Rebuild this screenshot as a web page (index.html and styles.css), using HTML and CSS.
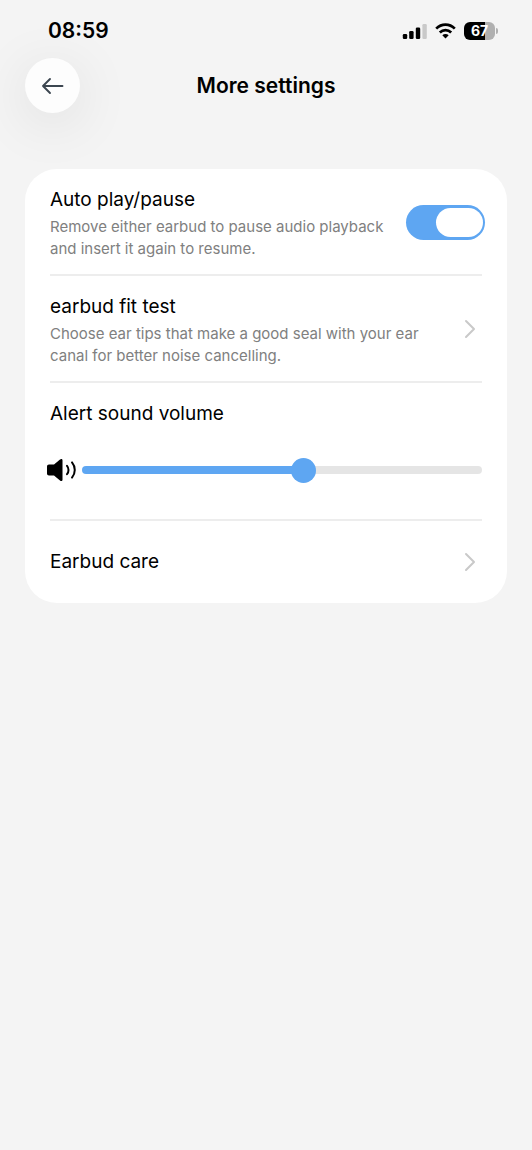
FILE: index.html
```html
<!DOCTYPE html>
<html lang="en">
<head>
<meta charset="utf-8">
<meta name="viewport" content="width=device-width, initial-scale=1">
<title>More settings</title>
<link rel="stylesheet" href="styles.css">
</head>
<body>
<div class="status-bar">
  <time class="clock">08:59</time>
  <div class="status-icons">
    <svg class="signal" width="25" height="16" viewBox="0 0 25 16" aria-hidden="true">
      <rect x="0.800" y="11" width="4.400" height="5" rx="1.300"/>
      <rect x="7.200" y="8" width="4.400" height="8" rx="1.300"/>
      <rect x="13.800" y="4.500" width="4.400" height="11.500" rx="1.300"/>
      <rect x="20.400" y="1" width="4.400" height="15" rx="1.300" fill="#c9c9c9"/>
    </svg>
    <svg class="wifi" width="21" height="16" viewBox="0 0 21 16" fill="none" stroke="#000" stroke-width="2.700" aria-hidden="true">
      <path d="M1.200 5.600C6.500.2 14.500.2 19.800 5.600"/>
      <path d="M4.800 9.500c3.300-3.300 8.100-3.300 11.400 0"/>
      <path d="M10.500 15.600 7.300 12.200c1.900-1.700 4.500-1.700 6.400 0z" fill="#000" stroke="none"/>
    </svg>
    <div class="battery"><span class="battery-body">67</span><span class="battery-tip"></span></div>
  </div>
</div>

<header class="header">
  <button class="back" type="button" aria-label="Back">
    <svg width="24" height="18" viewBox="0 0 24 18" fill="none" stroke="#3c4650" stroke-width="1.900" stroke-linecap="round" stroke-linejoin="round" aria-hidden="true">
      <path d="M21.500 9H2M9 2 2 9l7 7"/>
    </svg>
  </button>
  <h1 class="title">More settings</h1>
</header>

<main class="card">
  <section class="row">
    <div class="text">
      <label class="name" for="auto">Auto play/pause</label>
      <p class="desc">Remove either earbud to pause audio playback and insert it again to resume.</p>
    </div>
    <input class="toggle" id="auto" type="checkbox" role="switch" checked>
  </section>
  <a class="row" href="#fit">
    <span class="text">
      <span class="name">earbud fit test</span>
      <span class="desc">Choose ear tips that make a good seal with your ear canal for better noise cancelling.</span>
    </span>
    <svg class="chevron" width="12" height="20" viewBox="0 0 12 20" aria-hidden="true"><path d="m2 2 8 8-8 8"/></svg>
  </a>
  <section class="row volume">
    <label class="name" for="volume">Alert sound volume</label>
    <div class="slider-line">
      <svg width="29" height="24" viewBox="0 0 29 24" aria-hidden="true">
        <path d="M2 6.500h5l6-5c1.200-1 2.500-.5 2.500.8v19.400c0 1.300-1.300 1.800-2.500.8l-6-5H2c-1.200 0-2-.8-2-2v-7c0-1.200.8-2 2-2z"/>
        <path d="M20 7.800c2 2.300 2 6.100 0 8.400M25 4.400c3.700 4.400 3.700 10.800 0 15.200" fill="none" stroke="#000" stroke-width="2" stroke-linecap="round"/>
      </svg>
      <input class="slider" id="volume" type="range" min="0" max="1000" value="556">
    </div>
  </section>
  <a class="row care" href="#care">
    <span class="name">Earbud care</span>
    <svg class="chevron" width="12" height="20" viewBox="0 0 12 20" aria-hidden="true"><path d="m2 2 8 8-8 8"/></svg>
  </a>
</main>
</body>
</html>
```

FILE: styles.css
```css
* {
  box-sizing: border-box;
}

body {
  margin: 0;
  min-height: 100vh;
  background: #f4f4f4;
  color: #000;
  font-family: Inter, "Liberation Sans", sans-serif;
}

.status-bar {
  display: flex;
  align-items: center;
  justify-content: space-between;
  height: 58px;
  padding: 3px 34px 0 48px;
}

.clock {
  font-size: 21px;
  font-weight: 600;
  line-height: 28px;
}

.status-icons {
  display: flex;
  align-items: center;
  gap: 8px;
}

.battery {
  display: flex;
  align-items: center;
  gap: 1px;
}

.battery-body {
  width: 31px;
  height: 18px;
  border-radius: 6px;
  background: linear-gradient(90deg, #000 67%, #b0b0b0 67%);
  color: #fff;
  font-size: 14px;
  font-weight: 700;
  line-height: 18px;
  text-align: center;
}

.battery-tip {
  width: 2px;
  height: 6px;
  border-radius: 0 2px 2px 0;
  background: #b0b0b0;
}

.header {
  display: grid;
  grid-template-columns: 55px 1fr 55px;
  align-items: center;
  padding: 0 25px;
}

.back {
  display: flex;
  align-items: center;
  justify-content: center;
  width: 55px;
  height: 55px;
  padding: 0;
  border: 0;
  border-radius: 50%;
  background: #fdfdfd;
  box-shadow: 0 10px 56px rgba(0, 0, 0, 0.1);
}

.title {
  margin: 0;
  font-size: 21px;
  font-weight: 600;
  line-height: 28px;
  text-align: center;
}

.card {
  margin: 56px 25px 0;
  padding: 0 25px;
  border-radius: 32px;
  background: #fff;
}

.row {
  display: flex;
  align-items: center;
  justify-content: space-between;
  padding: 15px 0 14px;
  border-bottom: 2px solid #ededed;
  color: inherit;
  text-decoration: none;
}

.text {
  flex: 0 1 370px;
  padding-top: 2px;
}

.name {
  display: block;
  font-size: 19px;
  line-height: 28px;
}

.desc {
  display: block;
  margin: 2px 0 0;
  color: #808080;
  font-size: 15px;
  line-height: 22px;
}

.toggle {
  appearance: none;
  flex: none;
  display: flex;
  justify-content: flex-end;
  width: 79px;
  height: 35px;
  margin: 0 -3px 0 0;
  padding: 3px 2px;
  border-radius: 18px;
  background: #5ea6f2;
}

.toggle::before {
  content: "";
  width: 47px;
  border-radius: 15px;
  background: #fff;
}

.toggle:not(:checked) {
  justify-content: flex-start;
  background: #e5e5e5;
}

.chevron {
  flex: none;
  margin-right: 6px;
  fill: none;
  stroke: #c9c9c9;
  stroke-width: 2;
  stroke-linecap: round;
  stroke-linejoin: round;
}

.volume {
  display: block;
  padding: 17px 0 37px;
}

.slider-line {
  display: flex;
  align-items: center;
  gap: 6px;
  margin: 29px 0 0 -3px;
}

.slider {
  appearance: none;
  flex: 1;
  min-width: 0;
  height: 25px;
  margin: 0;
  background: none;
}

.slider::-webkit-slider-runnable-track {
  height: 8px;
  border-radius: 4px;
  background: linear-gradient(90deg, #5ea6f2 55%, #e5e5e5 55%);
}

.slider::-webkit-slider-thumb {
  appearance: none;
  width: 25px;
  height: 25px;
  margin-top: -8px;
  border-radius: 50%;
  background: #5ea6f2;
}

.care {
  height: 82px;
  padding: 0;
  border-bottom: 0;
}
```
